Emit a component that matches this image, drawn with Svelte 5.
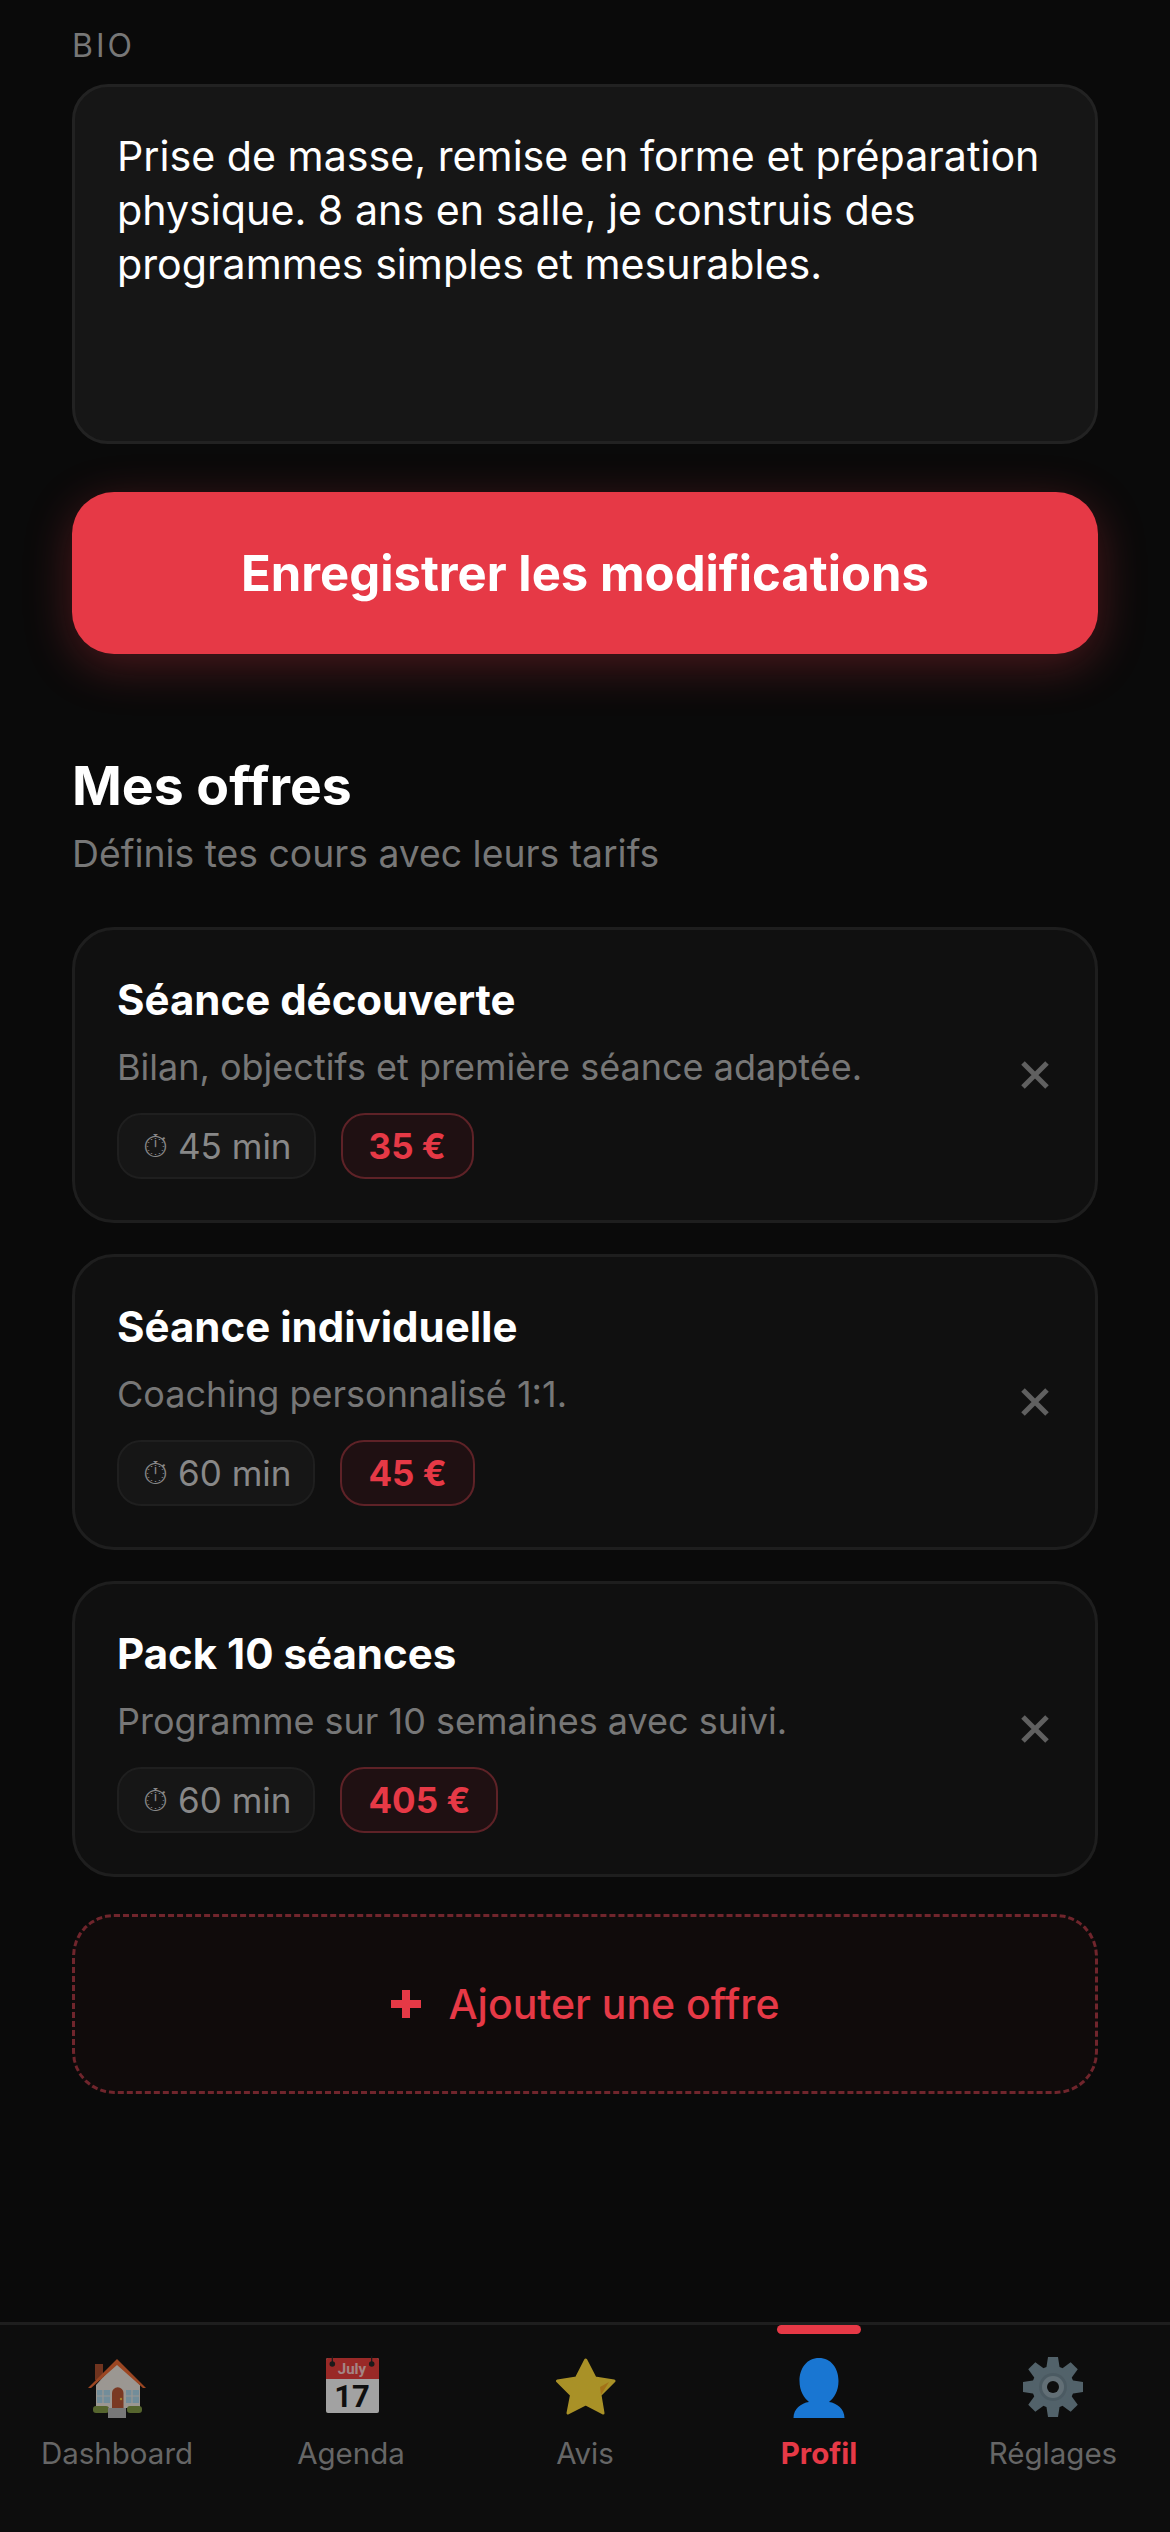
<script>
  const offers = [
    { title: 'Séance découverte', desc: 'Bilan, objectifs et première séance adaptée.', time: '45 min', price: '35 €' },
    { title: 'Séance individuelle', desc: 'Coaching personnalisé 1:1.', time: '60 min', price: '45 €' },
    { title: 'Pack 10 séances', desc: 'Programme sur 10 semaines avec suivi.', time: '60 min', price: '405 €' }
  ];
  const gearTeeth = [0, 45, 90, 135, 180, 225, 270, 315];
</script>

<div class="page">
  <main class="content">
    <span class="label">BIO</span>
    <div class="bio">Prise de masse, remise en forme et préparation physique. 8 ans en salle, je construis des programmes simples et mesurables.</div>
    <button class="save">Enregistrer les modifications</button>

    <h2>Mes offres</h2>
    <p class="sub">Définis tes cours avec leurs tarifs</p>

    <div class="offers">
      {#each offers as o}
        <article class="offer">
          <div class="info">
            <h3>{o.title}</h3>
            <p>{o.desc}</p>
            <div class="tags">
              <span class="tag"><span class="clock">⏱</span> {o.time}</span>
              <span class="tag price">{o.price}</span>
            </div>
          </div>
          <svg class="close" viewBox="0 0 30 30" aria-hidden="true"><path d="M3 3 27 27M27 3 3 27" /></svg>
        </article>
      {/each}
    </div>

    <button class="add"><span class="plus"></span>Ajouter une offre</button>
  </main>

  <nav>
    <div class="item dim">
      <svg viewBox="0 0 64 64">
        <rect x="10" y="9" width="8" height="16" fill="#a5492a" />
        <path d="M32 7 11 30v23h44V30z" fill="#e8e2da" />
        <path d="M3 33 32 4l29 29h-3L32 10 6 33z" fill="#e8652e" />
        <rect x="12" y="35" width="13" height="13" fill="#a9d2e6" />
        <rect x="41" y="35" width="13" height="13" fill="#a9d2e6" />
        <path d="M18 35v13M12 41h13M47 35v13M41 41h13" stroke="#e8e2da" stroke-width="1.200" />
        <path d="M27 53V38a5.700 5.700 0 0 1 11.500 0v15z" fill="#b5512f" />
        <circle cx="36" cy="44" r="1.200" fill="#f5c33b" />
        <rect x="8" y="51" width="16" height="7" rx="3" fill="#7d9440" />
        <rect x="42" y="51" width="15" height="7" rx="3" fill="#7d9440" />
        <rect x="23" y="53" width="18" height="10" fill="#b2b2b2" />
      </svg>
      <span>Dashboard</span>
    </div>
    <div class="item dim">
      <svg viewBox="0 0 64 64">
        <rect x="7" y="3" width="53" height="55" rx="2" fill="#f2f2f2" />
        <path d="M7 24V5a2 2 0 0 1 2-2h49a2 2 0 0 1 2 2v19z" fill="#e53935" />
        <path d="M13.300 1v8M52.700 1v8" stroke="#222" stroke-width="1.200" />
        <circle cx="13.300" cy="9" r="2.800" fill="#222" />
        <circle cx="52.700" cy="9" r="2.800" fill="#222" />
        <text x="33" y="19" class="month">July</text>
        <text x="33" y="52" class="day">17</text>
      </svg>
      <span>Agenda</span>
    </div>
    <div class="item dim">
      <svg viewBox="0 0 64 64">
        <path d="M32.700 5 42 23 61 26 47 40 50 58 32.700 49 15 58 18.500 40 4.500 26 23.500 23z" fill="#fdd835" stroke="#fdd835" stroke-width="3" stroke-linejoin="round" />
        <path d="M47 32 56 27 48 40z" fill="#f4a81f" />
      </svg>
      <span>Avis</span>
    </div>
    <div class="item active">
      <svg viewBox="0 0 64 64">
        <path d="M32 3C20 3 12.500 13 12.500 26 12.500 36 17 43 22 47 14 48 6.500 54 6.500 63H57.500C57.500 54 50 48 42 47 47 43 51.500 36 51.500 26 51.500 13 44 3 32 3z" fill="#1976d2" />
      </svg>
      <span>Profil</span>
    </div>
    <div class="item dim">
      <svg viewBox="0 0 64 64">
        {#each gearTeeth as a}
          <polygon points="27,2 37,2 39,15 25,15" fill="#78909c" transform="rotate({a} 32 32)" />
        {/each}
        <circle cx="32" cy="32" r="21" fill="#78909c" />
        <circle cx="32" cy="32" r="14" fill="#6d8490" />
        <circle cx="32" cy="32" r="11" fill="#90a4ae" />
        <circle cx="32" cy="32" r="6" fill="#0d0d0d" />
      </svg>
      <span>Réglages</span>
    </div>
  </nav>
</div>

<style>
  :global(body) {
    background: #0a0a0a;
  }

  .page {
    height: 2532px;
    display: flex;
    flex-direction: column;
    overflow: hidden;
    font-family: Inter, "Noto Sans", sans-serif;
    color: #fff;
  }

  .content {
    flex: 1;
    display: flex;
    flex-direction: column;
    padding: 28px 72px 0;
  }

  .label {
    font-size: 32px;
    line-height: 36px;
    letter-spacing: 3px;
    color: #777;
    margin-bottom: 20px;
  }

  .bio {
    height: 360px;
    box-sizing: border-box;
    padding: 42px 42px;
    background: #161616;
    border: 3px solid #222;
    border-radius: 36px;
    font-size: 41.200px;
    line-height: 54px;
  }

  .save {
    height: 162px;
    margin-top: 48px;
    border: 0;
    border-radius: 42px;
    background: #e63946;
    color: #fff;
    font: 700 49px Inter, sans-serif;
    box-shadow: 0 12px 48px rgba(230, 57, 70, 0.3);
  }

  h2 {
    margin: 100px 0 0;
    font-size: 53.500px;
    line-height: 64px;
    font-weight: 700;
  }

  .sub {
    margin: 14px 0 0;
    font-size: 37.300px;
    line-height: 44px;
    color: #777;
  }

  .offers {
    display: flex;
    flex-direction: column;
    gap: 31px;
    margin-top: 51px;
  }

  .offer {
    height: 296px;
    box-sizing: border-box;
    display: flex;
    align-items: center;
    justify-content: space-between;
    padding: 0 45px 0 42px;
    background: #101010;
    border: 3px solid #1e1e1e;
    border-radius: 42px;
  }

  .info {
    padding-top: 3px;
  }

  h3 {
    margin: 0;
    font-size: 42px;
    line-height: 52px;
    font-weight: 700;
  }

  .info p {
    margin: 19px 0 0;
    font-size: 36px;
    line-height: 44px;
    color: #777;
  }

  .tags {
    display: flex;
    gap: 25px;
    margin-top: 24px;
  }

  .tag {
    height: 66px;
    box-sizing: border-box;
    display: flex;
    align-items: center;
    gap: 10px;
    padding: 0 22px 0 24px;
    background: #161616;
    border: 2px solid #1f1f1f;
    border-radius: 24px;
    font-size: 35px;
    color: #888;
  }

  .clock {
    font-family: "DejaVu Sans", sans-serif;
    font-size: 32px;
  }

  .price {
    padding: 0 26px;
    background: #1f1012;
    border-color: #5e2227;
    color: #e63946;
    font-weight: 700;
  }

  .close {
    width: 30px;
    height: 30px;
    flex: none;
  }

  .close path {
    fill: none;
    stroke: #606060;
    stroke-width: 5;
  }

  .add {
    height: 180px;
    margin-top: 37px;
    display: flex;
    align-items: center;
    justify-content: center;
    gap: 28px;
    background: #100b0b;
    border: 3px dashed #70252c;
    border-radius: 42px;
    color: #e63946;
    font: 500 41px Inter, sans-serif;
  }

  .plus {
    width: 30px;
    height: 28px;
    background:
      linear-gradient(#e63946, #e63946) center / 100% 8px no-repeat,
      linear-gradient(#e63946, #e63946) center / 8px 100% no-repeat;
  }

  nav {
    position: relative;
    height: 210px;
    box-sizing: border-box;
    display: grid;
    grid-template-columns: repeat(5, 1fr);
    background: #0d0d0d;
    border-top: 3px solid #1e1e1e;
  }

  .item {
    position: relative;
    display: flex;
    flex-direction: column;
    align-items: center;
    padding-top: 30px;
    font-size: 29.500px;
    color: #666;
  }

  .item svg {
    height: 64px;
    width: 64px;
  }

  .item span {
    margin-top: 16px;
    line-height: 36px;
  }

  .dim svg {
    opacity: 0.65;
  }

  .active {
    color: #e63946;
    font-weight: 700;
  }

  .active::before {
    content: "";
    position: absolute;
    top: 0;
    width: 84px;
    height: 9px;
    border-radius: 5px;
    background: #e63946;
  }

  .month {
    font: 700 15px Roboto, sans-serif;
    fill: #f5c6c6;
    text-anchor: middle;
  }

  .day {
    font: 700 31px Roboto, sans-serif;
    fill: #111;
    text-anchor: middle;
  }
</style>
